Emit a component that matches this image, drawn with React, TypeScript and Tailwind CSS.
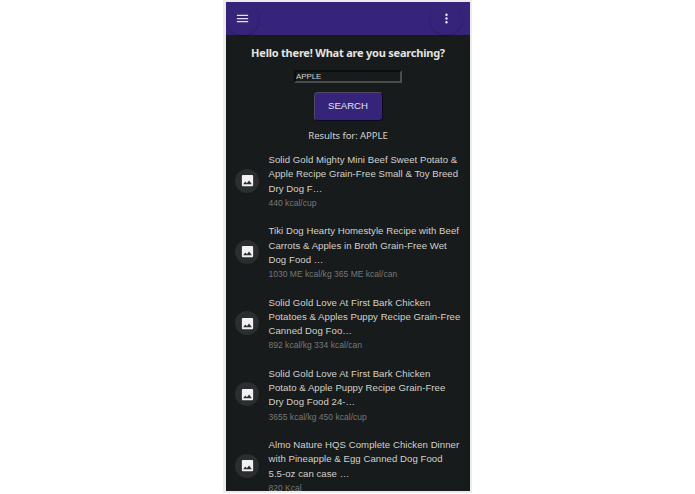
import { MdImage, MdMenu, MdMoreVert } from "react-icons/md";

const RESULTS = [
  {
    lines: ["Solid Gold Mighty Mini Beef Sweet Potato &", "Apple Recipe Grain-Free Small & Toy Breed", "Dry Dog F…"],
    calories: "440 kcal/cup",
  },
  {
    lines: ["Tiki Dog Hearty Homestyle Recipe with Beef", "Carrots & Apples in Broth Grain-Free Wet", "Dog Food …"],
    calories: "1030 ME kcal/kg 365 ME kcal/can",
  },
  {
    lines: ["Solid Gold Love At First Bark Chicken", "Potatoes & Apples Puppy Recipe Grain-Free", "Canned Dog Foo…"],
    calories: "892 kcal/kg 334 kcal/can",
  },
  {
    lines: ["Solid Gold Love At First Bark Chicken", "Potato & Apple Puppy Recipe Grain-Free", "Dry Dog Food 24-…"],
    calories: "3655 kcal/kg 450 kcal/cup",
  },
  {
    lines: ["Almo Nature HQS Complete Chicken Dinner", "with Pineapple & Egg Canned Dog Food", "5.5-oz can case …"],
    calories: "820 Kcal",
  },
];

function TopBar() {
  return (
    <header className="flex h-[33px] items-center justify-between bg-[#35247a] text-[#e4e2ec]">
      <button className="flex size-[33px] items-center justify-center rounded-full shadow-[0_1px_2px_rgba(0,0,0,0.25)]">
        <MdMenu className="size-[15px]" />
      </button>
      <button className="mr-2 flex size-8 items-center justify-center rounded-full shadow-[0_1px_2px_rgba(0,0,0,0.25)]">
        <MdMoreVert className="size-[15px]" />
      </button>
    </header>
  );
}

function SearchForm() {
  return (
    <div className="flex flex-col items-center">
      <h1 className="mt-[9px] whitespace-nowrap font-['Noto_Sans',sans-serif] text-[11px] leading-[18px] font-bold tracking-[-0.22px] text-[#e4e3e1]">
        Hello there! What are you searching?
      </h1>
      <input
        defaultValue="APPLE"
        className="mt-2 h-[13px] w-[108px] border-2 border-t-[#0c0d0d] border-r-[#4b4d4d] border-b-[#4b4d4d] border-l-[#0c0d0d] text-[8px] leading-[9px] tracking-[-0.1px] text-[#d2d0cd]"
      />
      <button className="mt-[9px] h-[29px] w-[69px] rounded-[4px] border-[1.5px] border-t-[#4d4a63] border-r-[#0d0a20] border-b-[#0d0a20] border-l-[#4d4a63] bg-[#35247a] text-[9.6px] tracking-[-0.03px] text-[#e4e2ec]">
        SEARCH
      </button>
      <p className="mt-[7px] whitespace-nowrap font-['Noto_Sans',sans-serif] text-[9.6px] leading-4 tracking-[-0.1px] text-[#d2d0cd]">
        Results for: APPLE
      </p>
    </div>
  );
}

export default function App() {
  return (
    <main className="flex h-[494px] w-[695px] justify-center bg-white font-['Liberation_Sans',Arial,sans-serif]">
      <div className="h-[493px] w-[249px] overflow-hidden border-2 border-l-[3px] border-[#ececec] bg-[#181b1b]">
        <TopBar />
        <SearchForm />
        <ul className="mt-px">
          {RESULTS.map((item) => (
            <li key={item.calories} className="flex h-[71.25px] items-center pl-[9px]">
              <div className="flex size-6 shrink-0 items-center justify-center rounded-full bg-[#2b2e2f]">
                <MdImage className="size-[15px] text-[#f2f2f2]" />
              </div>
              <div className="ml-[9.5px] whitespace-nowrap pt-[2px]">
                {item.lines.map((line) => (
                  <p key={line} className="text-[9.6px] leading-[14.25px] tracking-[0.05px] text-[#d2d0cd]">{line}</p>
                ))}
                <p className="text-[8.5px] leading-[14.25px] tracking-[0.02px] text-[#75787a]">{item.calories}</p>
              </div>
            </li>
          ))}
        </ul>
      </div>
    </main>
  );
}
